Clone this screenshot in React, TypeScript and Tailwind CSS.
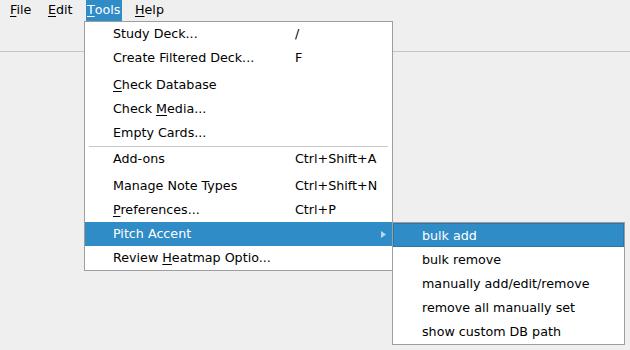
import React from "react";

const font = { fontFamily: '"DejaVu Sans", "Liberation Sans", sans-serif' };

function U({ children }: { children: React.ReactNode }) {
  return <span className="underline underline-offset-[2px] decoration-[1px]">{children}</span>;
}

type Item = {
  label: React.ReactNode;
  shortcut?: string;
  active?: boolean;
  sub?: boolean;
};

function Row({ item }: { item: Item }) {
  const base =
    "relative flex items-center h-[24px] pl-[28px] pt-[1px] text-[12.7px] leading-none " +
    (item.active ? "bg-[#308cc6] text-white" : "text-black");
  return (
    <div className={base}>
      <span className="w-[182px] whitespace-nowrap">{item.label}</span>
      {item.shortcut && <span className="whitespace-nowrap">{item.shortcut}</span>}
      {item.sub && (
        <svg className="absolute right-[6px] top-[9px]" width="5" height="7" viewBox="0 0 5 7">
          <path d="M0 0 L5 3.5 L0 7 Z" fill="#b8d8f0" />
        </svg>
      )}
    </div>
  );
}

export default function App() {
  const subItems = ["bulk add", "bulk remove", "manually add/edit/remove", "remove all manually set", "show custom DB path"];
  return (
    <div className="relative w-[630px] h-[350px] bg-[#efefef] overflow-hidden" style={font}>
      {/* menu bar */}
      <div className="flex h-[21px] items-center text-[12.7px] text-black leading-none">
        <span className="ml-[10px] w-[38px]"><U>F</U>ile</span>
        <span className="w-[38px]"><U>E</U>dit</span>
        <span className="w-[36px] h-[21px] pl-[1px] flex items-center bg-[#308cc6] text-white"><U>T</U>ools</span>
        <span className="ml-[13px]"><U>H</U>elp</span>
      </div>
      <div className="h-[30px]" />
      <div className="h-px bg-[#c6c6c6]" />

      {/* Tools menu */}
      <div className="absolute left-[84px] top-[21px] w-[309px] bg-white border border-[#9e9e9e]">
        <Row item={{ label: "Study Deck...", shortcut: "/" }} />
        <Row item={{ label: "Create Filtered Deck...", shortcut: "F" }} />
        <div className="h-[3px]" />
        <Row item={{ label: <><U>C</U>heck Database</> }} />
        <Row item={{ label: <>Check <U>M</U>edia...</> }} />
        <Row item={{ label: "Empty Cards..." }} />
        <div className="h-[2px] flex items-center px-[4px]">
          <div className="h-px w-full bg-[#c8c8c8]" />
        </div>
        <Row item={{ label: "Add-ons", shortcut: "Ctrl+Shift+A" }} />
        <div className="h-[3px]" />
        <Row item={{ label: "Manage Note Types", shortcut: "Ctrl+Shift+N" }} />
        <Row item={{ label: <><U>P</U>references...</>, shortcut: "Ctrl+P" }} />
        <Row item={{ label: "Pitch Accent", active: true, sub: true }} />
        <Row item={{ label: <>Review <U>H</U>eatmap Optio...</> }} />
      </div>

      {/* Submenu */}
      <div className="absolute left-[392px] top-[222px] w-[233px] bg-white border border-[#9e9e9e] pb-px">
        {subItems.map((t, i) =>
          i === 0 ? (
            <div
              key={t}
              className="flex items-center h-[24px] pl-[28px] pt-[2px] text-[12.7px] leading-none whitespace-nowrap bg-[#308cc6] text-white border border-[#2a78ab]"
            >
              {t}
            </div>
          ) : (
            <div
              key={t}
              className="flex items-center h-[24px] pl-[29px] pt-[3px] text-[12.7px] leading-none whitespace-nowrap text-black"
            >
              {t}
            </div>
          )
        )}
      </div>
    </div>
  );
}
